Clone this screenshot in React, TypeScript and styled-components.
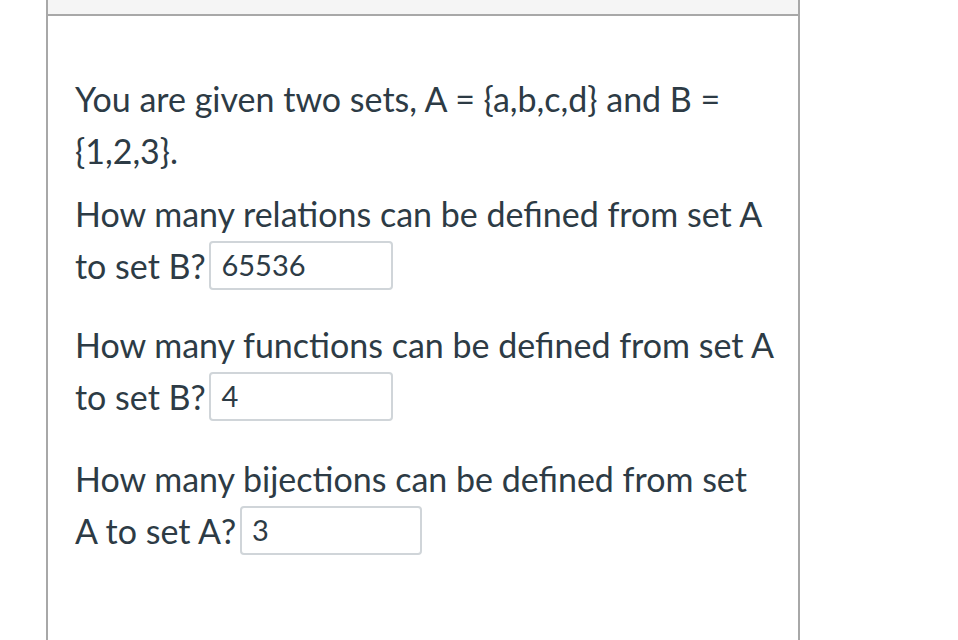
import React from "react"
import styled, { createGlobalStyle } from "styled-components"

const GlobalStyle = createGlobalStyle`
    html, body {
        margin: 0;
        padding: 0;
        background: #ffffff;
    }

    body {
        font-family: Lato, "Noto Sans", sans-serif;
        color: #2d3b45;
    }
`

const Page = styled.div`
    height: 640px;
    overflow: hidden;
`

const QuestionPanel = styled.div`
    margin-left: 46px;
    width: 750px;
    min-height: 640px;
    border-left: 2px solid #a8a8a8;
    border-right: 2px solid #a8a8a8;
`

const PanelHeader = styled.div`
    height: 14px;
    background-color: #f5f5f5;
    border-bottom: 2px solid #a8a8a8;
`

const QuestionText = styled.div`
    padding: 57px 23px 0 27px;
    font-size: 34px;
    line-height: 52px;
`

const Paragraph = styled.p<{ $after?: number }>`
    margin: 0 0 ${props => props.$after ?? 11}px 0;
`

const AnswerBox = styled.span<{ $width: number }>`
    display: inline-block;
    box-sizing: border-box;
    width: ${props => props.$width}px;
    height: 49px;
    margin-left: -5px;
    padding: 0 10px;
    vertical-align: 3px;
    border: 2px solid #d0d5d9;
    border-radius: 4px;
    font-size: 29px;
    line-height: 44px;
    color: #2d3b45;
    background: #ffffff;
`

export default function App() {
    return (
        <Page>
            <GlobalStyle />
            <QuestionPanel>
                <PanelHeader />
                <QuestionText>
                    <Paragraph>You are given two sets, A = {"{a,b,c,d}"} and B = {"{1,2,3}"}.</Paragraph>
                    <Paragraph $after={27}>
                        How many relations can be defined from set A to set B? <AnswerBox $width={184}>65536</AnswerBox>
                    </Paragraph>
                    <Paragraph $after={30}>
                        How many functions can be defined from set A to set B? <AnswerBox $width={184}>4</AnswerBox>
                    </Paragraph>
                    <Paragraph>
                        How many bijections can be defined from set A to set A? <AnswerBox $width={182}>3</AnswerBox>
                    </Paragraph>
                </QuestionText>
            </QuestionPanel>
        </Page>
    )
}
